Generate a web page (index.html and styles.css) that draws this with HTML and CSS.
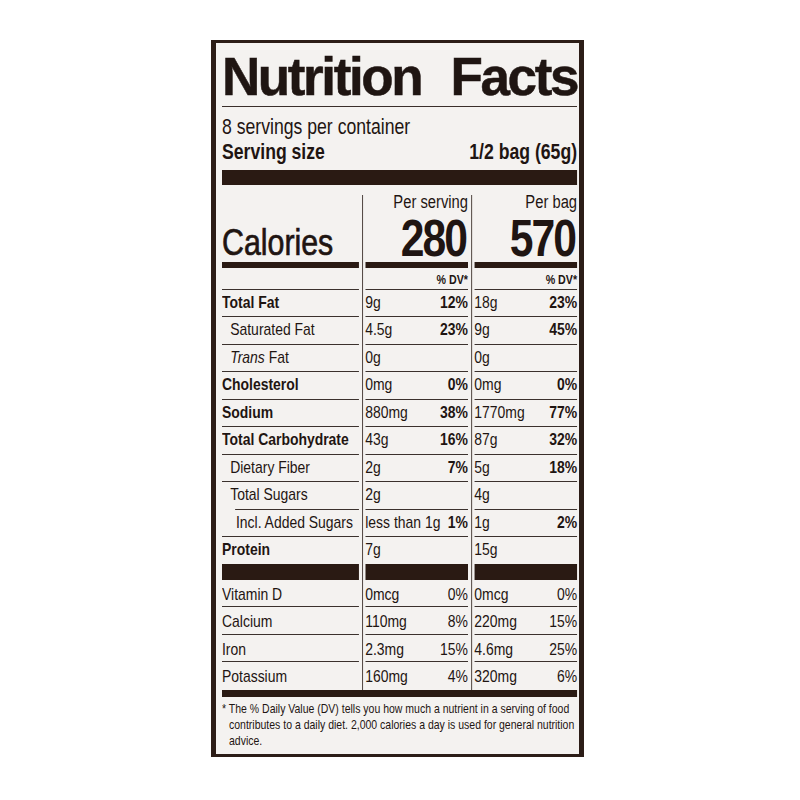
FILE: index.html
```html
<!DOCTYPE html>
<html lang="en">
<head>
    <meta charset="UTF-8">
    <meta name="viewport" content="width=device-width, initial-scale=1.0">
    <title>Nutrition Facts</title>
    <link rel="stylesheet" href="styles.css">
</head>
<body>

<div class="label">
    <h1 class="title"><span>Nutrition</span><span>Facts</span></h1>

    <!-- tudo abaixo do titulo usa a letra estreita -->
    <div class="narrow">
        <div class="servings">
            <p>8 servings per container</p>
            <p class="size"><b>Serving size</b><b>1/2 bag (65g)</b></p>
        </div>

        <div class="bar bar-thick"></div>

        <div class="facts">
            <!-- nome dos nutrientes -->
            <div class="col col-label">
                <div class="head"><span class="calories">Calories</span></div>
                <div class="bar bar-mid"></div>
                <div class="dv"></div>
                <div class="row"><b>Total Fat</b></div>
                <div class="row sub"><span>Saturated Fat</span></div>
                <div class="row sub"><span><i>Trans</i> Fat</span></div>
                <div class="row"><b>Cholesterol</b></div>
                <div class="row"><b>Sodium</b></div>
                <div class="row"><b>Total Carbohydrate</b></div>
                <div class="row sub"><span>Dietary Fiber</span></div>
                <div class="row sub cut"><span>Total Sugars</span></div>
                <div class="row sub2"><span>Incl. Added Sugars</span></div>
                <div class="row last"><b>Protein</b></div>
                <div class="bar bar-thick"></div>
                <div class="row vit"><span>Vitamin D</span></div>
                <div class="row vit"><span>Calcium</span></div>
                <div class="row vit"><span>Iron</span></div>
                <div class="row vit last"><span>Potassium</span></div>
            </div>

            <!-- por porcao -->
            <div class="col col-value">
                <div class="head"><span class="per">Per serving</span><span class="kcal">280</span></div>
                <div class="bar bar-mid"></div>
                <div class="dv">% DV*</div>
                <div class="row"><span>9g</span><b>12%</b></div>
                <div class="row"><span>4.5g</span><b>23%</b></div>
                <div class="row"><span>0g</span></div>
                <div class="row"><span>0mg</span><b>0%</b></div>
                <div class="row"><span>880mg</span><b>38%</b></div>
                <div class="row"><span>43g</span><b>16%</b></div>
                <div class="row"><span>2g</span><b>7%</b></div>
                <div class="row"><span>2g</span></div>
                <div class="row"><span>less than 1g</span><b>1%</b></div>
                <div class="row last"><span>7g</span></div>
                <div class="bar bar-thick"></div>
                <div class="row vit"><span>0mcg</span><span>0%</span></div>
                <div class="row vit"><span>110mg</span><span>8%</span></div>
                <div class="row vit"><span>2.3mg</span><span>15%</span></div>
                <div class="row vit last"><span>160mg</span><span>4%</span></div>
            </div>

            <!-- pacote inteiro -->
            <div class="col col-value">
                <div class="head"><span class="per">Per bag</span><span class="kcal">570</span></div>
                <div class="bar bar-mid"></div>
                <div class="dv">% DV*</div>
                <div class="row"><span>18g</span><b>23%</b></div>
                <div class="row"><span>9g</span><b>45%</b></div>
                <div class="row"><span>0g</span></div>
                <div class="row"><span>0mg</span><b>0%</b></div>
                <div class="row"><span>1770mg</span><b>77%</b></div>
                <div class="row"><span>87g</span><b>32%</b></div>
                <div class="row"><span>5g</span><b>18%</b></div>
                <div class="row"><span>4g</span></div>
                <div class="row"><span>1g</span><b>2%</b></div>
                <div class="row last"><span>15g</span></div>
                <div class="bar bar-thick"></div>
                <div class="row vit"><span>0mcg</span><span>0%</span></div>
                <div class="row vit"><span>220mg</span><span>15%</span></div>
                <div class="row vit"><span>4.6mg</span><span>25%</span></div>
                <div class="row vit last"><span>320mg</span><span>6%</span></div>
            </div>
        </div>

        <div class="bar bar-bottom"></div>

        <p class="note">* The % Daily Value (DV) tells you how much a nutrient in a serving of food<br>contributes to a daily diet. 2,000 calories a day is used for general nutrition<br>advice.</p>
    </div>
</div>

</body>
</html>
```

FILE: styles.css
```css
/* pagina */
body {
    margin: 0;
    background: #ffffff;
    font-family: "Liberation Sans", Arial, sans-serif;
    color: #1f1512;
}

/* caixa do rotulo */
.label {
    box-sizing: border-box;
    width: 373px;
    margin: 40px 0 0 211px;
    border-style: solid;
    border-color: #2c1d17;
    border-width: 3px 5px 3px 5px;
    padding: 0 2px 0 6px;
    background: #f4f2f0;
}

.title {
    display: flex;
    justify-content: space-between;
    margin: 0;
    padding: 7px 0 3px;
    border-bottom: 1.5px solid #3a2e2a;
    font-weight: bold;
    font-size: 53px;
    line-height: 53px;
    letter-spacing: -2.4px;
    -webkit-text-stroke: 0.5px #1f1512;
}

/* sem fonte condensada instalada: largura 433px encolhida para 355px */
.narrow {
    width: 433px;
    transform: scaleX(0.82);
    transform-origin: left top;
}

.servings {
    margin-top: 8px;
    font-size: 21.5px;
    line-height: 25px;
}

.servings p {
    margin: 0;
}

.size {
    display: flex;
    justify-content: space-between;
}

.bar {
    background: #2a1a13;
}

.bar-thick {
    height: 15px;
    margin-top: 4.5px;
}

.facts .bar-thick {
    height: 16px;
    margin-top: 0;
}

.bar-mid {
    height: 6px;
}

.bar-bottom {
    height: 7px;
}

/* tabela em 3 colunas */
.facts {
    display: grid;
    grid-template-columns: 167px 133px 133px;
}

.col-value {
    margin: 10px 0 0 3.7px;
    padding-left: 3px;
    border-left: 1.8px solid #2c1f1a;
}

.head {
    display: flex;
    height: 77px;
    align-items: flex-end;
}

.col-value .head {
    height: 67px;
    flex-direction: column;
    justify-content: space-between;
}

.calories {
    font-size: 37px;
    line-height: 37px;
    margin-bottom: 1px;
    -webkit-text-stroke: 0.7px #1f1512;
}

.per {
    font-size: 18px;
    line-height: 14px;
}

.kcal {
    font-weight: bold;
    font-size: 52px;
    line-height: 44px;
    letter-spacing: -2.4px;
    margin: 0 2.4px 2px 0;
}

.dv {
    box-sizing: border-box;
    height: 22px;
    padding-top: 2px;
    border-bottom: 1px solid #3b312d;
    font-weight: bold;
    font-size: 13px;
    line-height: 19px;
    text-align: right;
}

.row {
    box-sizing: border-box;
    display: flex;
    justify-content: space-between;
    height: 27.5px;
    border-bottom: 1px solid #3b312d;
    font-size: 17px;
    line-height: 26.5px;
    white-space: nowrap;
}

.row.last {
    border-bottom: none;
    height: 26.5px;
}

.row.vit {
    padding-top: 3px;
    line-height: 23.5px;
}

.row.vit.last {
    height: 27.5px;
}

.sub {
    padding-left: 10px;
}

.sub2 {
    padding-left: 17px;
}

/* linha recuada abaixo de Total Sugars */
.cut {
    border-bottom-color: transparent;
    background: linear-gradient(#3b312d, #3b312d) no-repeat right bottom / calc(100% - 16px) 1px;
    background-origin: border-box;
}

.note {
    margin: 0;
    padding: 4.3px 0 4.8px 8.5px;
    text-indent: -8.5px;
    font-size: 12.8px;
    line-height: 16.3px;
    white-space: nowrap;
}
```
